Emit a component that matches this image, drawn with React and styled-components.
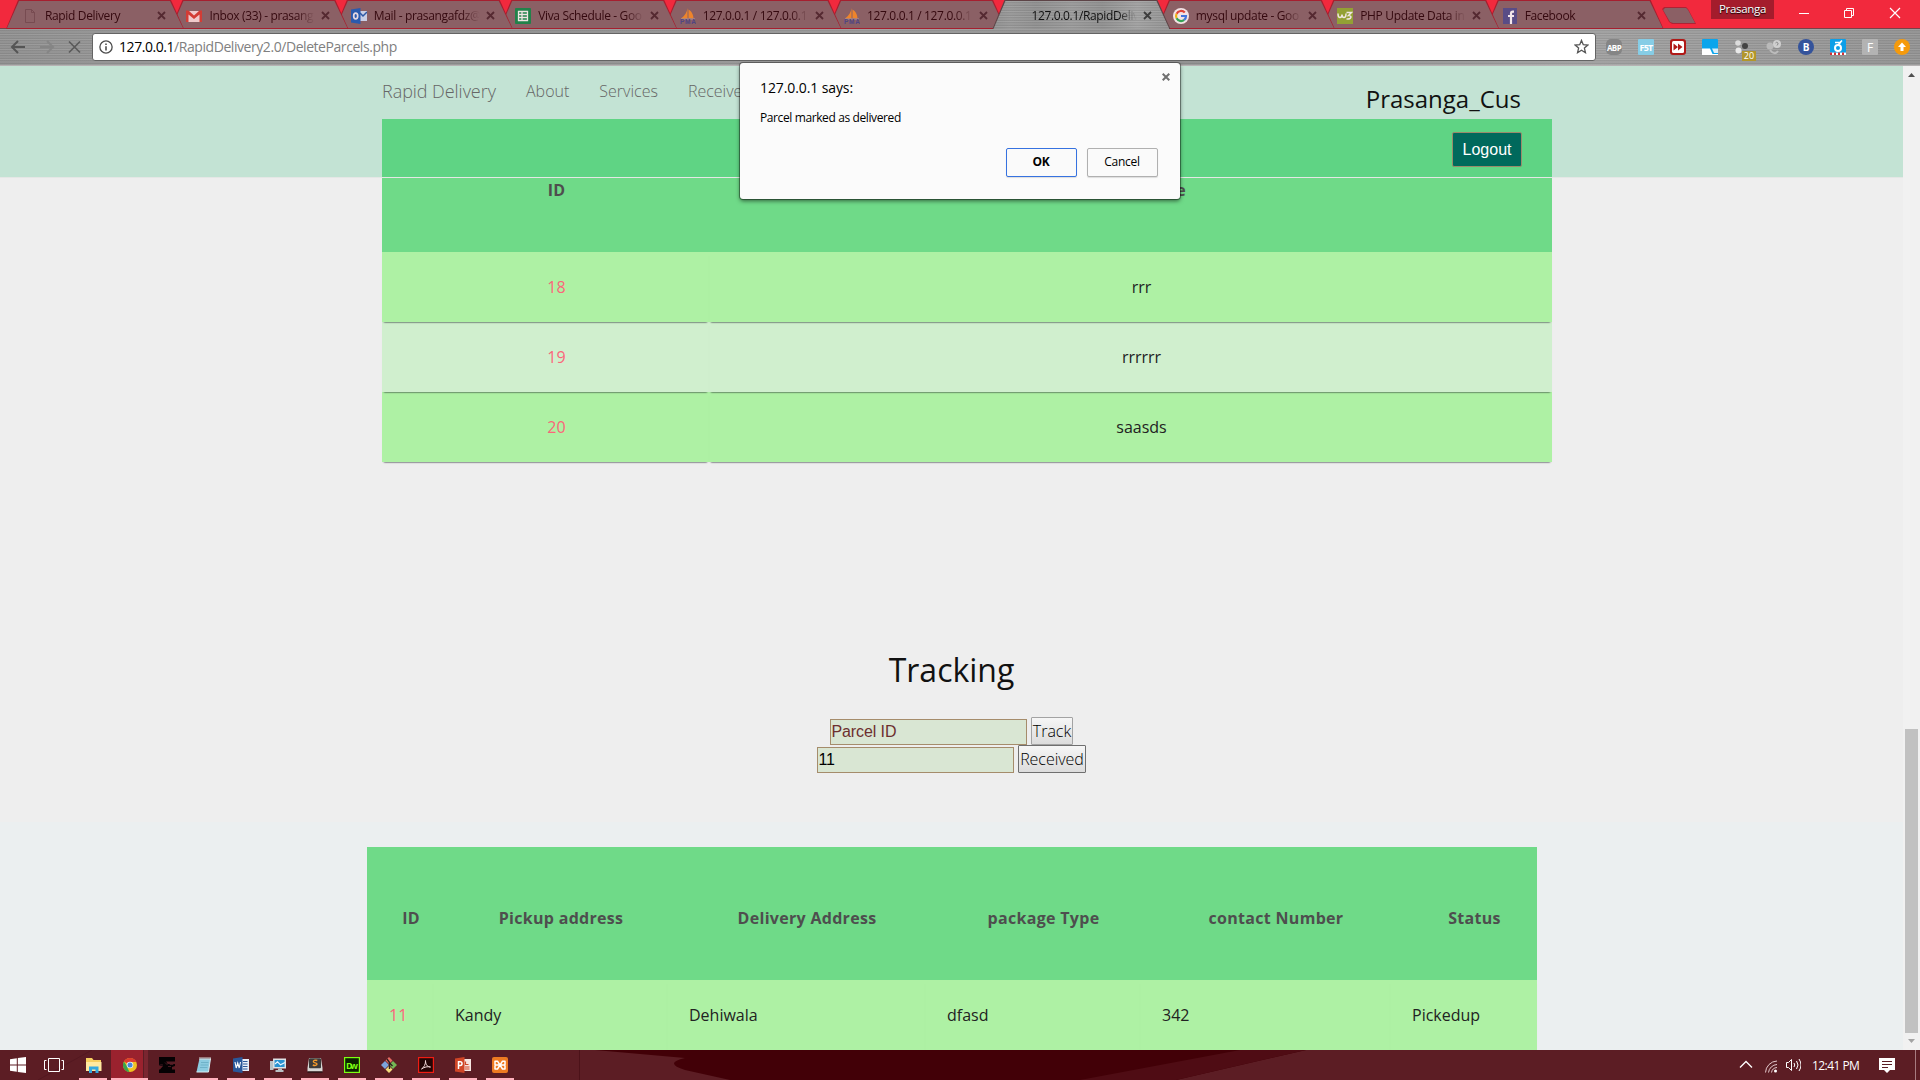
import React from 'react';
import styled, { createGlobalStyle, css } from 'styled-components';

const Global = createGlobalStyle`
  *, *::before, *::after { box-sizing: border-box; }
  html, body { margin: 0; padding: 0; overflow: hidden; background: #eee; }
  svg { display: block; flex: none; }
`;

const ui = `"Open Sans", "Noto Sans", sans-serif`;
const metal = css`
  background:
    repeating-linear-gradient(180deg, rgba(255,255,255,.10) 0 1px, rgba(0,0,0,.04) 1px 2px, rgba(255,255,255,.03) 2px 4px, rgba(0,0,0,.05) 4px 5px),
    linear-gradient(90deg, #8f8f8f 0%, #979797 10%, #8f8f8f 25%, #999 45%, #8f8f8f 62%, #a0a0a0 82%, #929292 100%);
`;

const Screen = styled.div`
  width: 1920px;
  height: 1080px;
  display: flex;
  flex-direction: column;
  position: relative;
  overflow: hidden;
  font-family: ${ui};
`;

/* ---------- tab strip ---------- */
const TabStrip = styled.div`
  height: 29px;
  flex: none;
  display: flex;
  padding-left: 6px;
  background: #f2293d;
  border-bottom: 1px solid #77434a;
`;
const TabShape = styled.div`
  width: 178px;
  height: 29px;
  margin-right: -13.6px;
  flex: none;
  position: relative;
  z-index: ${p => p.$z};
  isolation: isolate;
  display: flex;
  align-items: center;
  padding: 2px 0 0 16px;
  color: ${p => (p.$active ? '#111' : '#35090f')};
  clip-path: polygon(0 100%, 12px 0, 165px 0, 100% 100%);
  background: ${p => (p.$active ? '#5d4447' : '#a61f2f')};
  &::before {
    content: '';
    position: absolute;
    inset: 1px 1px ${p => (p.$active ? 0 : 1)}px 1px;
    z-index: -1;
    clip-path: polygon(0 100%, 12px 0, 163px 0, 100% 100%);
    ${p => (p.$active ? metal : 'background: #8b6065;')}
  }
`;
const TabIcon = styled.div`
  width: 16px;
  height: 16px;
  margin-right: 7px;
  flex: none;
`;
const TabTitle = styled.div`
  width: 109px;
  font-size: 12px;
  letter-spacing: -0.35px;
  line-height: 16px;
  white-space: nowrap;
  mask-image: linear-gradient(90deg, #000 80%, transparent 97%);
`;
const CloseX = styled.svg`
  margin-left: 3px;
`;
const NewTab = styled.div`
  width: 34px;
  height: 17px;
  margin: 7px 0 0 12px;
  flex: none;
  background: #b02234;
  clip-path: polygon(0 2px, 2px 0, 24px 0, 26px 2px, 100% 100%, 10px 100%, 7px 15px);
  padding: 1px;
  &::before {
    content: '';
    display: block;
    height: 15px;
    background: #8b6065;
    clip-path: polygon(0 2px, 2px 0, 23px 0, 25px 2px, 100% 100%, 10px 100%, 7px 14px);
  }
`;
const WindowControls = styled.div`
  margin-left: auto;
  width: 209px;
  display: flex;
  align-items: flex-start;
`;
const Profile = styled.div`
  width: 63px;
  height: 19px;
  background: #a41c2c;
  color: #fff;
  font-size: 11.5px;
  letter-spacing: -0.3px;
  line-height: 18px;
  text-align: center;
  text-shadow: 0 1px 1px #000;
`;

/* ---------- toolbar ---------- */
const Toolbar = styled.div`
  height: 37px;
  flex: none;
  display: flex;
  align-items: center;
  padding-left: 10px;
  border-bottom: 1px solid #b6b2b3;
  ${metal}
`;
const NavIcons = styled.div`
  display: flex;
  width: 82px;
  gap: 13px;
  padding-bottom: 1px;
`;
const Omnibox = styled.div`
  width: 1504px;
  height: 28px;
  margin-top: -1px;
  display: flex;
  align-items: center;
  padding: 0 6px;
  background: #fff;
  border: 1px solid #646464;
  border-radius: 3px;
`;
const Url = styled.div`
  flex: 1;
  margin-left: 6px;
  font-size: 14px;
  letter-spacing: -0.44px;
  color: #808080;
  b { font-weight: 400; color: #000; }
`;
const Extensions = styled.div`
  display: flex;
  gap: 16px;
  margin-left: 10px;
`;
const Ext = styled.div`
  width: 16px;
  height: 16px;
  flex: none;
  position: relative;
  display: flex;
  align-items: center;
  justify-content: center;
  background: ${p => p.$bg || 'transparent'};
  border-radius: ${p => p.$r || '1px'};
  color: ${p => p.$fg || '#fff'};
  font: ${p => p.$font || `700 10px ${ui}`};
  letter-spacing: ${p => p.$ls || '0'};
`;
const Badge = styled.span`
  position: absolute;
  left: 8px;
  top: 12px;
  width: 14px;
  height: 10px;
  background: #b2962a;
  color: #fff;
  font: 9px/10px ${ui};
  text-align: center;
`;

/* ---------- page ---------- */
const Viewport = styled.div`
  height: 984px;
  flex: none;
  display: flex;
`;
const Page = styled.main`
  width: 1903px;
  height: 984px;
  position: relative;
  isolation: isolate;
  overflow: hidden;
  background: #eee;
`;
const Header = styled.header`
  position: absolute;
  z-index: 2;
  top: 0;
  left: 0;
  width: 100%;
  height: 112px;
  padding: 0 381px 0 382px;
  display: flex;
  justify-content: space-between;
  background: rgba(38, 190, 119, 0.21);
  border-bottom: 1px solid #e4e7e5;
  background-clip: padding-box;
`;
const Nav = styled.nav`
  display: flex;
  height: 50px;
  align-items: center;
  font-weight: 300;
  color: #666;
`;
const Brand = styled.span`
  width: 144px;
  font-size: 18px;
  letter-spacing: -0.05px;
`;
const NavLink = styled.span`
  font-size: 16px;
  margin-right: 30px;
  letter-spacing: 0;
`;
const Account = styled.div`
  display: flex;
  flex-direction: column;
  align-items: flex-end;
  padding-top: 15px;
`;
const UserName = styled.div`
  margin-right: 1px;
  font-size: 24px;
  line-height: 36px;
  color: #111;
`;
const Logout = styled.button`
  width: 70px;
  height: 35px;
  margin-top: 15px;
  padding: 1px 0 0;
  background: #00695c;
  border: 1px solid #9b8a6a;
  border-radius: 2px;
  color: #fff;
  font: 16px "Liberation Sans", Arial, sans-serif;
`;

const ParcelSection = styled.section`
  height: 756px;
  padding-top: 53px;
`;
const TrackedSection = styled.section`
  height: 228px;
  padding-top: 25px;
  background: #ebeff0;
`;
const Table = styled.table`
  width: 1170px;
  margin-left: ${p => p.$left}px;
  table-layout: fixed;
  border-spacing: 0;
  font-size: 16px;
  color: #222;
`;
const HeadRow = styled.tr`
  height: 133px;
  background: #6fda88;
`;
const Th = styled.th`
  padding: 8px 0 0 22px;
  font-weight: 700;
  color: #4e4e4e;
  white-space: nowrap;
  letter-spacing: 0.3px;
`;
const Row = styled.tr`
  height: 70px;
  background: ${p => (p.$alt ? '#d0efce' : '#aef1a4')};
`;
const Td = styled.td`
  position: relative;
  padding: 0 0 0 22px;
  text-align: ${p => p.$align || 'left'};
  box-shadow: 0 2px 2px -2px #0e1119, 0 2px 1px -2px rgba(14, 17, 25, 0.3);
  &:first-child { color: #fb667a; }
`;
const Tracking = styled.div`
  height: 360px;
  display: flex;
  flex-direction: column;
  align-items: center;
  padding-top: 185px;
`;
const Title = styled.h2`
  margin: 0 0 24px;
  font-size: 32px;
  font-weight: 400;
  line-height: 46px;
  color: #111;
`;
const FormRow = styled.form`
  display: flex;
  align-items: flex-end;
  gap: 4px;
  height: 28px;
`;
const Field = styled.input`
  width: 197px;
  height: 26px;
  padding: 0 1px 0 0.5px;
  background: #d9e6d3;
  border: 1px solid #a58c6b;
  outline: none;
  font: 16px "Liberation Sans", Arial, sans-serif;
  letter-spacing: -0.1px;
  color: #000;
  &::placeholder { color: #6d2f2f; opacity: 1; }
`;
const FormButton = styled.button`
  width: ${p => p.$w}px;
  height: 28px;
  padding: 0;
  border: 1px solid ${p => p.$line};
  border-radius: 1px;
  background: linear-gradient(#f6f6f6, #dcdcdc);
  font: 300 16px ${ui};
  letter-spacing: -0.03px;
  color: #000;
`;

const Scrollbar = styled.div`
  width: 17px;
  background: #f1f1f1;
  display: flex;
  flex-direction: column;
  align-items: center;
  padding: 7px 0;
`;
const Thumb = styled.div`
  width: 13px;
  height: 304px;
  margin: 652px 0 6px;
  background: #c1c1c1;
`;

/* ---------- alert dialog ---------- */
const Dialog = styled.div`
  position: absolute;
  z-index: 30;
  left: 740px;
  top: 63px;
  width: 440px;
  height: 136px;
  padding: 15px 22px 22px 20px;
  display: flex;
  flex-direction: column;
  background: #fbfbfb;
  border-radius: 3px;
  box-shadow: 0 0 0 1px rgba(0,0,0,.35), 0 2px 4px rgba(0,0,0,.55);
  color: #000;
`;
const DialogTitle = styled.div`
  font-size: 14px;
  line-height: 20px;
  letter-spacing: -0.1px;
`;
const DialogText = styled.div`
  margin-top: 12px;
  font-size: 12px;
  line-height: 16px;
  letter-spacing: -0.39px;
`;
const DialogButtons = styled.div`
  display: flex;
  justify-content: flex-end;
  gap: 10px;
  margin-top: auto;
`;
const DialogButton = styled.button`
  width: 71px;
  height: 29px;
  padding: 0 1px 2px 0;
  background: #fafafa;
  border: 1px solid ${p => (p.$primary ? '#3672e0' : '#b0b0b0')};
  border-radius: 2px;
  box-shadow: 0 1px 1px rgba(0,0,0,.12);
  font: ${p => (p.$primary ? 700 : 400)} 12px ${ui};
  letter-spacing: -0.3px;
  color: #000;
`;
const DialogClose = styled.svg`
  position: absolute;
  right: 10px;
  top: 10px;
`;

/* ---------- taskbar ---------- */
const Taskbar = styled.footer`
  height: 30px;
  flex: none;
  display: flex;
  position: relative;
  isolation: isolate;
  background: #5c1d24;
`;
const Wallpaper = styled.svg`
  position: absolute;
  inset: 0;
  z-index: -1;
`;
const TaskItem = styled.div`
  width: 37px;
  height: 30px;
  flex: none;
  display: flex;
  justify-content: center;
  align-items: center;
  background: ${p => (p.$active ? 'linear-gradient(90deg, #9a222e 0 32px, #5c1d24 32px 33px, #7a2630 33px)' : 'none')};
`;
const TaskInner = styled.div`
  width: ${p => (p.$active ? 37 : 28)}px;
  height: 30px;
  padding-left: ${p => (p.$active ? 0 : 1)}px;
  display: flex;
  justify-content: center;
  align-items: center;
  box-shadow: inset 0 -2px 0 ${p => (p.$open ? '#ffb0bc' : 'transparent')};
`;
const StartArea = styled.div`
  width: 74px;
  height: 30px;
  display: flex;
  align-items: center;
  gap: 18px;
  padding-left: 10px;
  flex: none;
`;
const Tray = styled.div`
  margin-left: auto;
  width: 181px;
  display: flex;
  align-items: center;
  color: #fff;
`;
const Clock = styled.span`
  width: 48px;
  margin: 0 19px 0 11px;
  font-size: 12px;
  letter-spacing: -0.55px;
  white-space: nowrap;
`;
const ShowDesktop = styled.div`
  width: 5px;
  height: 30px;
  margin-left: auto;
  border-left: 1px solid #a77b80;
`;

/* ---------- drawings ---------- */
const Svg = ({ children, s = 16, w, h, ...r }) => (
  <svg width={w || s} height={h || s} viewBox={`0 0 ${w || 16} ${h || 16}`} fill="none" {...r}>{children}</svg>
);
const fav = {
  page: <Svg><path d="M3.5 1.5h6l3 3v10h-9z M9.5 1.5v3h3" stroke="#774b51" /></Svg>,
  gmail: <Svg><rect x="1" y="3" width="14" height="11" fill="#f0c9cb" /><path d="M0 2.5h2.5L8 7.5l5.500-5H16V14h-2.500V6.500L8 11 2.500 6.500V14H0z" fill="#d33c35" /></Svg>,
  outlook: <Svg><path d="M8 3h8v10H8z" fill="#c9cfe6" /><path d="M9 5l3 3 4-4" stroke="#2d58a6" strokeWidth="1.500" /><path d="M0 1.500L9.500 0v16l-9.500-1.500z" fill="#2a5aae" /><ellipse cx="4.700" cy="8" rx="2" ry="2.800" stroke="#e6d8e2" strokeWidth="1.700" /></Svg>,
  sheet: <Svg><rect width="16" height="16" rx="1" fill="#21824a" /><path d="M3.500 3.500h9v9h-9z M3.500 6.500h9 M3.500 9.500h9 M7 3.500v9" stroke="#efe3e3" strokeWidth="1.300" /></Svg>,
  pma: <Svg><path d="M7.500 0C7 4 5 8 1 10.500h6.500z M8.500 1.500c3 1.500 5 5.500 5 9l-5-.5z" fill="#ee842b" /><path d="M1 11h14" stroke="#b9a5a8" strokeWidth=".8" /><text x="0" y="16" fontFamily="Liberation Sans" fontSize="6.500" fontWeight="700" textLength="16" fill="#4f4583">PMA</text></Svg>,
  google: <Svg><circle cx="8" cy="8" r="8" fill="#f3e3e5" /><path d="M11.800 4.600A5 5 0 0 0 3.600 5.700" stroke="#e04539" strokeWidth="2.200" /><path d="M3.600 5.700a5 5 0 0 0 0 4.600" stroke="#eeb216" strokeWidth="2.200" /><path d="M3.600 10.300a5 5 0 0 0 7.600 1.600" stroke="#35a354" strokeWidth="2.200" /><path d="M11.200 11.900A5 5 0 0 0 13 8H8" stroke="#4376dd" strokeWidth="2.200" /></Svg>,
  w3: <Svg><rect width="16" height="16" fill="#93a034" /><path d="M1 5.500q0 4 2 4t2-3q0 3 2 3t2-4M9.500 4.500h5l-3 3c3.500-.3 3.500 4-2 3.500" stroke="#f0e6e2" strokeWidth="1.500" /></Svg>,
  fb: <Svg><rect x="1" width="14" height="16" fill="#594c86" /><path d="M12 3.700h-1.200c-1.300 0-1.800.6-1.800 1.800V16M6 8h6" stroke="#f3e6ea" strokeWidth="2.200" /></Svg>,
};
const tabs = [
  ['page', 'Rapid Delivery'],
  ['gmail', 'Inbox (33) - prasang'],
  ['outlook', 'Mail - prasangafdz@'],
  ['sheet', 'Viva Schedule - Goo'],
  ['pma', '127.0.0.1 / 127.0.0.1'],
  ['pma', '127.0.0.1 / 127.0.0.1'],
  [null, '127.0.0.1/RapidDeliv', true],
  ['google', 'mysql update - Goo'],
  ['w3', 'PHP Update Data in'],
  ['fb', 'Facebook'],
];

const tasks = [
  { open: true, icon: <Svg w={17} h={16}><path d="M1 1h6l1.500 2H16v11H1z" fill="#f7cf60" /><path d="M1 5h15.500v9H1z" fill="#ffe9a0" /><path d="M4 16V9.500h9.500V16h-3v-3.500H7V16z" fill="#34a8df" /></Svg> },
  { open: true, active: true, icon: <Svg><circle cx="8" cy="8" r="7" fill="#f0c020" /><path d="M8 8L1.900 4.500A7 7 0 0 1 14.300 5H8z" fill="#df3c2f" /><path d="M8 8L5.500 11 7.500 15A7 7 0 0 1 1.900 4.500l3.400 5z" fill="#3ba54b" /><circle cx="8" cy="8" r="3.300" fill="#e8eef5" /><circle cx="8" cy="8" r="2.500" fill="#4a86d8" /></Svg> },
  { icon: <Svg><path d="M0 0h16v4.500H0z M0 12.500h16V16H0z M0 4.500h7l2 2.500h7v2l-3 1v2.500H1l3-3.500H0z" fill="#050103" /><path d="M0 8.500q2-1 4-.5M6 5.500l2 2 2-2M11 5.500h3v2h-3zM9 9.500h3" stroke="#50202a" strokeWidth=".8" /></Svg> },
  { open: true, icon: <Svg><path d="M3.500 1.500h11L12.500 15H.5z" fill="#8ccbe0" /><path d="M14.500 1.500l-2 13.500H.5" stroke="#d9eef4" /><path d="M5 5.500h7.500M4.600 8h7.500M4 10.500h7.500" stroke="#6fb2c9" /><path d="M4 0v3M6 0v3M8 0v3M10 0v3M12 0v3M14 0v3" stroke="#e7e7e7" strokeWidth=".9" /></Svg> },
  { open: true, icon: <Svg><path d="M8 2h8v12H8z" fill="#e9eef8" /><path d="M10 4.500h4.500M10 7h4.500M10 9.500h4.500M10 12h4.500" stroke="#2a579a" strokeWidth="1.200" /><path d="M0 1.500L9.500 0v16L0 14.500z" fill="#2a579a" /><path d="M2 5l1.200 6 1.500-5 1.500 5L7.500 5" stroke="#fff" strokeWidth="1.100" /></Svg> },
  { open: true, icon: <Svg><path d="M0 4h3.500v9H0z" fill="#b9c1c5" /><path d="M3.800 2.300h11.500v8.500H3.800z" fill="#2a93d2" stroke="#dfe4e7" strokeWidth="1.500" /><path d="M5 7l2.500-2.200 3 3L15 5.500" stroke="#eaf6ff" strokeWidth="1.200" /><path d="M8 11.500h4v1.500h1.500v2h-8v-2H8z" fill="#b9c1c5" /></Svg> },
  { open: true, icon: <Svg><path d="M2 1h12l1.500 10v3.500h-15V11z" fill="#d8d8d6" /><rect x="2" y="1.200" width="12" height="10" rx="1" fill="#3c3b3a" /><path d="M10.300 3.500c-2.300-.8-4.200.2-3.900 1.400s3.600.8 3.600 2.200-2.300 1.700-4.200.9" stroke="#f59b2c" strokeWidth="1.400" /><path d="M.5 15h15" stroke="#111" /></Svg> },
  { open: true, icon: <Svg><rect x=".6" y=".6" width="14.800" height="14.800" fill="#0c2200" stroke="#7dff12" strokeWidth="1.200" /><text x="2" y="11.500" fontFamily="Open Sans" fontSize="9" fontWeight="700" textLength="12" fill="#7dff12">Dw</text></Svg> },
  { open: true, icon: <Svg><path d="M8 0l3.500 3.500L8 7 4.500 3.500z" fill="#e66a62" /><path d="M4 4l4 4-4 4-4-4z" fill="#7ca3dc" /><path d="M12 4l4 4-4 4-4-4z" fill="#75b755" /><path d="M8 9l3.500 3.500L8 16l-3.500-3.500z" fill="#f3dc7c" /><path d="M6 2l2.500 3.500V12M8.500 6l3 3" stroke="#2d2020" strokeWidth="1.400" /></Svg> },
  { open: true, icon: <Svg><rect x=".6" y=".6" width="14.800" height="14.800" fill="#220605" stroke="#f01c12" strokeWidth="1.200" /><path d="M3.500 12C6 10.500 7.800 7 7.500 3.500 7.500 7.500 9.500 10 12.500 10 9.500 9.200 6.500 10 3.500 12z" stroke="#efd7d6" /></Svg> },
  { open: true, icon: <Svg><path d="M8 2h8v12H8z" fill="#f6e5e0" /><path d="M10.500 4.500v3h3M10 10h4.500M10 12h4.500" stroke="#cf4526" strokeWidth="1.200" /><path d="M0 1.500L9.500 0v16L0 14.500z" fill="#cf4526" /><path d="M3.500 12V4.700h1.800c2.300 0 2.300 3.800 0 3.800H3.500" stroke="#fff" strokeWidth="1.500" /></Svg> },
  { open: true, icon: <Svg><rect width="16" height="16" rx="2" fill="#ee7b22" /><path d="M3 4.200h2.500L10.500 12H13M3 12h2.500L10.500 4.200H13M3 4.200v3.300M3 8.800V12M13 4.200v3.300M13 8.800V12M4 8h2.500M9.500 8H12" stroke="#fff" strokeWidth="1.500" strokeLinejoin="round" strokeLinecap="round" /></Svg> },
];

const parcels = [['18', 'rrr'], ['19', 'rrrrrr'], ['20', 'saasds']];
const trackedHead = ['ID', 'Pickup address', 'Delivery Address', 'package Type', 'contact Number', 'Status'];
const tracked = ['11', 'Kandy', 'Dehiwala', 'dfasd', '342', 'Pickedup'];
const trackedCols = [66, 234, 258, 215, 250, 147];

export default function App() {
  return (
    <Screen>
      <Global />
      <TabStrip>
        {tabs.map(([icon, title, active], i) => (
          <TabShape key={i} $active={active} $z={active ? 20 : 10 - i}>
            <TabIcon>{icon && fav[icon]}</TabIcon>
            <TabTitle>{title}</TabTitle>
            <CloseX width="9" height="9" viewBox="0 0 9 9">
              <path d="M1 1l7 7M8 1l-7 7" stroke={active ? '#3c3c3c' : '#552931'} strokeWidth="1.800" />
            </CloseX>
          </TabShape>
        ))}
        <NewTab />
        <WindowControls>
          <Profile>Prasanga</Profile>
          <svg width="146" height="28" viewBox="0 0 146 28" fill="none" stroke="#fff">
            <path d="M25 13.500h10M70.500 10.500h7v7h-7zM72.500 10.500v-2h7v7h-2" />
            <path d="M116 8l10 10M126 8l-10 10" strokeWidth="1.200" />
          </svg>
        </WindowControls>
      </TabStrip>

      <Toolbar>
        <NavIcons>
          <Svg w={16} h={16}><path d="M15 8H2M8 2L2 8l6 6" stroke="#555" strokeWidth="2" /></Svg>
          <Svg w={16} h={16}><path d="M1 8h12M8 2l6 6-6 6" stroke="#858585" strokeWidth="2" /></Svg>
          <Svg w={16} h={16}><path d="M1 2.500l11 11M12 2.500l-11 11" stroke="#5a5a5a" strokeWidth="1.700" /></Svg>
        </NavIcons>
        <Omnibox>
          <Svg w={14} h={14} viewBox="0 0 16 16"><circle cx="8" cy="8" r="7" stroke="#4c4c4c" strokeWidth="1.500" /><path d="M8 7v5M8 4v1.600" stroke="#4c4c4c" strokeWidth="1.800" /></Svg>
          <Url><b>127.0.0.1</b>/RapidDelivery2.0/DeleteParcels.php</Url>
          <Svg w={15} h={15} viewBox="0 0 16 16"><path d="M8 1.500l1.900 4.600 4.900.4-3.700 3.200 1.100 4.900L8 12l-4.200 2.600 1.100-4.900L1.200 6.500l4.900-.4z" stroke="#555" strokeWidth="1.400" /></Svg>
        </Omnibox>
        <Extensions>
          <Ext $bg="#858585" $r="5px" $font={`700 8px ${ui}`} $ls="-0.6px">ABP</Ext>
          <Ext $bg="#86cde6" $font={`700 9px ${ui}`} $ls="-0.8px">F5T</Ext>
          <Ext $bg="#b01917" $r="3px"><Svg><rect x="2" y="2" width="12" height="12" rx="1.500" fill="#fff" /><path d="M3.500 4.500v7L8 8zM8 4.500v7L12.500 8z" fill="#b01917" /></Svg></Ext>
          <Ext $bg="#0ba5ec"><Svg><path d="M0 9.500h8l2.500 5.500H16v1H0z" fill="#fff" /><path d="M10 9.500h6V14h-4z" fill="#d8eefa" /></Svg></Ext>
          <Ext><Svg><circle cx="4" cy="4" r="2.800" fill="#dcdcdc" /><circle cx="4.500" cy="11.500" r="3" fill="#e9e9e9" /><circle cx="11" cy="7" r="3" fill="#444" /></Svg><Badge>20</Badge></Ext>
          <Ext><Svg><circle cx="4" cy="7" r="3.500" fill="#b9b9b9" /><circle cx="11" cy="5" r="4" fill="#cfcfcf" /><path d="M4 11c3 4 6 4 8 1" stroke="#bdbdbd" strokeWidth="2" /><path d="M9.500 4c1-1.500 3-.5 2.500 1l-1 1.500" stroke="#888" /></Svg></Ext>
          <Ext $bg="#34539b" $r="50%">B</Ext>
          <Ext $bg="#0d9fe8"><Svg><circle cx="8" cy="9" r="3" stroke="#fff" strokeWidth="2" /><path d="M5 3.500h5l2-2M8 6l3-3" stroke="#fff" strokeWidth="1.600" /><path d="M0 14.800h16" stroke="#fff" strokeWidth="2.400" /><path d="M0 14.800h16" stroke="#d22f35" strokeWidth="2.400" strokeDasharray="2 2" /></Svg></Ext>
          <Ext $bg="#b3b3b3" $font={`400 12px ${ui}`}>F</Ext>
          <Ext $bg="#f59a0c" $r="50%"><Svg><path d="M8 3.500L12 8H9.500v4h-3V8H4z" fill="#fff" /></Svg></Ext>
        </Extensions>
      </Toolbar>

      <Viewport>
        <Page>
          <ParcelSection>
            <Table $left={382}>
              <colgroup><col width="327" /><col width="843" /></colgroup>
              <thead><HeadRow><Th>ID</Th><Th>User name</Th></HeadRow></thead>
              <tbody>
                {parcels.map(([id, name], i) => (
                  <Row key={id} $alt={i === 1}><Td $align="center">{id}</Td><Td $align="center">{name}</Td></Row>
                ))}
              </tbody>
            </Table>
            <Tracking>
              <Title>Tracking</Title>
              <FormRow><Field placeholder="Parcel ID" /><FormButton type="button" $w={42} $line="#a3a3a3">Track</FormButton></FormRow>
              <FormRow><Field defaultValue="11" /><FormButton type="button" $w={68} $line="#6f6f6f">Received</FormButton></FormRow>
            </Tracking>
          </ParcelSection>
          <TrackedSection>
            <Table $left={367}>
              <colgroup>{trackedCols.map((w, i) => <col key={i} width={w} />)}</colgroup>
              <thead><HeadRow>{trackedHead.map(h => <Th key={h}>{h}</Th>)}</HeadRow></thead>
              <tbody><Row>{tracked.map(t => <Td key={t}>{t}</Td>)}</Row></tbody>
            </Table>
          </TrackedSection>
          <Header>
            <Nav>
              <Brand>Rapid Delivery</Brand>
              <NavLink>About</NavLink>
              <NavLink>Services</NavLink>
              <NavLink>Receive</NavLink>
            </Nav>
            <Account>
              <UserName>Prasanga_Cus</UserName>
              <Logout>Logout</Logout>
            </Account>
          </Header>
        </Page>
        <Scrollbar>
          <svg width="7" height="4" viewBox="0 0 7 4"><path d="M3.500 0L7 4H0z" fill="#505050" /></svg>
          <Thumb />
          <svg width="7" height="4" viewBox="0 0 7 4"><path d="M0 0h7L3.500 4z" fill="#a3a3a3" /></svg>
        </Scrollbar>
      </Viewport>

      <Taskbar>
        <Wallpaper width="1920" height="30" viewBox="0 0 1920 30">
          <path d="M595 0L685 8q-22 5 0 12l45 10h446L1306 0z" fill="#420007" />
          <path d="M1080 30L1240 0h66L1176 30z" fill="#4f0c14" />
          <path d="M579.500 0v30" stroke="#4c1219" />
          <path d="M38 30L92 0" stroke="#541820" />
        </Wallpaper>
        <StartArea>
          <Svg><path d="M0 2.200L6.800 1.200v6.300H0zM7.800 1.100L16 0v7.500H7.800zM0 8.500h6.800v6.300L0 13.800zM7.800 8.500H16V16l-8.200-1.100z" fill="#fff" /></Svg>
          <Svg w={20} h={16}><path d="M4.500 1.500h11v13h-11zM2.500 3.500h-2v9h2M17.500 3.500h2v9h-2" stroke="#fff" /></Svg>
        </StartArea>
        {tasks.map((t, i) => (
          <TaskItem key={i} $active={t.active}>
            <TaskInner $open={t.open} $active={t.active}>{t.icon}</TaskInner>
          </TaskItem>
        ))}
        <Tray>
          <svg width="62" height="16" viewBox="0 0 62 16" fill="none" stroke="#fff">
            <path d="M1 10.500L7 4.500l6 6" strokeWidth="1.300" />
            <path d="M26.500 15.500A12 12 0 0 1 38 4M29.500 15.500A9 9 0 0 1 38 7.500M32.500 15.500A6 6 0 0 1 38 10.500" stroke="#e4c9cc" />
            <circle cx="36.500" cy="14" r="1.500" fill="#fff" stroke="none" />
            <path d="M47.500 5.500h2l3-3v11l-3-3h-2zM55 6q1.500 2 0 4M57.500 4q3 4 0 8M60 2q4 6 0 12" />
          </svg>
          <Clock>12:41 PM</Clock>
          <svg width="16" height="17" viewBox="0 0 16 17"><path d="M0 1h16v12h-5l-3 3-3-3H0z" fill="#fff" /><path d="M3 4.500h10M3 7.500h10M3 10.500h6" stroke="#5c1d24" strokeWidth="1.200" /></svg>
          <ShowDesktop />
        </Tray>
      </Taskbar>

      <Dialog>
        <DialogTitle>127.0.0.1 says:</DialogTitle>
        <DialogText>Parcel marked as delivered</DialogText>
        <DialogButtons>
          <DialogButton $primary>OK</DialogButton>
          <DialogButton>Cancel</DialogButton>
        </DialogButtons>
        <DialogClose width="8" height="8" viewBox="0 0 8 8"><path d="M.7.7l6.600 6.600M7.300.7L.7 7.300" stroke="#707070" strokeWidth="2" /></DialogClose>
      </Dialog>
    </Screen>
  );
}
